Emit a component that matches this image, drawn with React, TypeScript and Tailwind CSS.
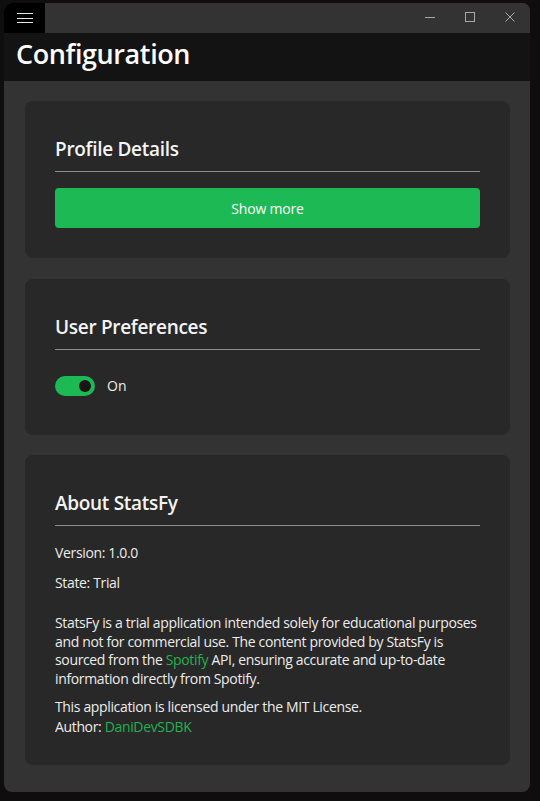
import * as React from "react"

const font = { fontFamily: '"Open Sans", "Noto Sans", sans-serif' }

function Card({ title, children, className = "" }: { title: string; children: React.ReactNode; className?: string }) {
    return (
        <div className={`rounded-lg bg-[#282828] px-[30px] pt-[35px] ${className}`}>
            <h2 className="text-[19px] leading-[27px] font-semibold text-[#f4f4f4] tracking-[-0.3px]">{title}</h2>
            <div className="mt-[8px] h-px bg-[#8c8c8c]" />
            {children}
        </div>
    )
}

export default function App() {
    const [on, setOn] = React.useState(true)

    return (
        <div className="w-[540px] h-[801px] bg-[#0f0d0d] pl-[4px] pt-[3px]" style={font}>
            <div className="w-[526px] h-[789px] rounded-lg overflow-hidden bg-[#333333] flex flex-col">
                {/* Title bar */}
                <div className="h-[30px] flex items-center bg-[#333333]">
                    <button className="w-[41px] h-[30px] bg-black flex flex-col items-center justify-center gap-[3.5px]">
                        <span className="block w-[16px] h-px bg-[#e8e8e8]" />
                        <span className="block w-[16px] h-px bg-[#e8e8e8]" />
                        <span className="block w-[16px] h-px bg-[#e8e8e8]" />
                    </button>
                    <div className="flex-1" />
                    <div className="flex items-center pb-[2px]">
                        <div className="w-[40px] h-[30px] flex items-center justify-center">
                            <span className="block w-[10px] h-px bg-[#a8a8a8]" />
                        </div>
                        <div className="w-[40px] h-[30px] flex items-center justify-center">
                            <span className="block w-[10px] h-[10px] border border-[#a8a8a8]" />
                        </div>
                        <div className="w-[40px] h-[30px] flex items-center justify-center">
                            <svg width="10" height="10" viewBox="0 0 10 10">
                                <path d="M0.5 0.5L9.5 9.5M9.5 0.5L0.5 9.5" stroke="#a8a8a8" strokeWidth="1" />
                            </svg>
                        </div>
                    </div>
                </div>

                {/* Header */}
                <div className="h-[48px] bg-[#131313] pl-[12px] flex items-center">
                    <h1 className="text-[27px] font-semibold text-white tracking-[-0.4px] leading-none pb-[7px]">Configuration</h1>
                </div>

                {/* Content */}
                <div className="flex-1 pl-[21px] pr-[20px] pt-[20px] flex flex-col gap-[20px]">
                    <Card title="Profile Details" className="pb-[30px]">
                        <button className="mt-[16px] w-full h-[40px] rounded-[4px] bg-[#1db954] text-white text-[14px] tracking-[-0.2px]">
                            Show more
                        </button>
                    </Card>

                    <Card title="User Preferences" className="mt-[1px] pb-[39px]">
                        <div className="mt-[25px] flex items-center gap-[12px]">
                            <button
                                onClick={() => setOn(!on)}
                                className="w-[40px] h-[20px] rounded-full bg-[#1db954] flex items-center justify-end pr-[4px]"
                            >
                                <span className="block w-[12px] h-[12px] rounded-full bg-[#1a1616]" />
                            </button>
                            <span className="text-[14px] text-[#ececec]">{on ? "On" : "Off"}</span>
                        </div>
                    </Card>

                    <Card title="About StatsFy" className="pb-[28px]">
                        <div className="text-[14px] text-[#ececec] tracking-[-0.35px]">
                            <p className="mt-[17px] leading-[20px]">Version: 1.0.0</p>
                            <p className="mt-[10px] leading-[20px]">State: Trial</p>
                            <p className="mt-[21px] leading-[18.6px]">
                                <span className="block">StatsFy is a trial application intended solely for educational purposes</span>
                                <span className="block">and not for commercial use. The content provided by StatsFy is</span>
                                <span className="block">
                                    sourced from the <span className="text-[#1fb24f]">Spotify</span> API, ensuring accurate and up-to-date
                                </span>
                                <span className="block">information directly from Spotify.</span>
                            </p>
                            <p className="mt-[9px] leading-[20px]">
                                <span className="block">This application is licensed under the MIT License.</span>
                                <span className="block">
                                    Author: <span className="text-[#1fb24f]">DaniDevSDBK</span>
                                </span>
                            </p>
                        </div>
                    </Card>
                </div>
            </div>
        </div>
    )
}
